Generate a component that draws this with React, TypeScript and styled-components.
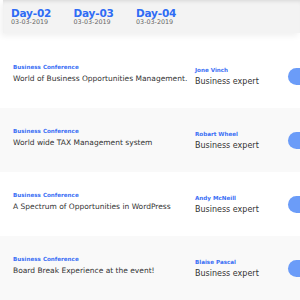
import React from "react";
import styled, { createGlobalStyle } from "styled-components";

const Global = createGlobalStyle`
  html, body { margin: 0; padding: 0; background: #ffffff; }
  body { font-family: "DejaVu Sans", "Inter", sans-serif; overflow: hidden; }
`;

const Page = styled.div`
  width: 300px;
  height: 300px;
  overflow: hidden;
  display: flex;
  flex-direction: column;
`;

const TabBar = styled.div`
  height: 33px;
  flex: 0 0 auto;
  background: #f3f3f3;
  box-shadow: inset 0 4px 4px -3px rgba(0, 0, 0, 0.12), -2px 3px 6px rgba(0, 0, 0, 0.06);
  margin-left: 3px;
  display: flex;
  align-items: flex-start;
  padding: 8px 0 0 8px;
  box-sizing: border-box;
`;

const Tab = styled.div`
  width: 62.5px;
  display: flex;
  flex-direction: column;
`;

const DayLabel = styled.div`
  color: #2f6cf5;
  font-size: 10.5px;
  font-weight: 600;
  line-height: 11px;
  letter-spacing: -0.2px;
`;

const DateLabel = styled.div`
  color: #666;
  font-size: 6.4px;
  line-height: 7px;
`;

const List = styled.div`
  margin-top: 11px;
  display: flex;
  flex-direction: column;
`;

const Row = styled.div<{ $shade: boolean }>`
  height: 64px;
  flex: 0 0 auto;
  background: ${(p) => (p.$shade ? "#f9f9f9" : "#ffffff")};
  display: flex;
  align-items: center;
  padding-left: 13px;
  box-sizing: border-box;
  overflow: hidden;
`;

const Info = styled.div`
  flex: 0 0 182px;
  display: flex;
  flex-direction: column;
  margin-top: -4px;
`;

const Category = styled.div`
  color: #3a6ff5;
  font-size: 5.6px;
  font-weight: 600;
  line-height: 9px;
`;

const Title = styled.div`
  color: #333;
  font-size: 7.5px;
  line-height: 13px;
  white-space: nowrap;
`;

const Speaker = styled.div`
  flex: 0 0 93px;
  display: flex;
  flex-direction: column;
  margin-top: 1px;
`;

const SpeakerName = styled.div`
  color: #3a6ff5;
  font-size: 5.6px;
  font-weight: 600;
  line-height: 9px;
`;

const Role = styled.div`
  color: #333;
  font-size: 8px;
  line-height: 13px;
  white-space: nowrap;
`;

const JoinButton = styled.div`
  flex: 0 0 40px;
  height: 17px;
  border-radius: 9px;
  background: #6b9cf8;
`;

const days = [
  { day: "Day-02", date: "03-03-2019" },
  { day: "Day-03", date: "03-03-2019" },
  { day: "Day-04", date: "03-03-2019" },
];

const sessions = [
  { title: "World of Business Opportunities Management.", name: "Jone Vinch" },
  { title: "World wide TAX Management system", name: "Robart Wheel" },
  { title: "A Spectrum of Opportunities in WordPress", name: "Andy McNeill" },
  { title: "Board Break Experience at the event!", name: "Blaise Pascal" },
];

export default function App() {
  return (
    <Page>
      <Global />
      <TabBar>
        {days.map((d) => (
          <Tab key={d.day}>
            <DayLabel>{d.day}</DayLabel>
            <DateLabel>{d.date}</DateLabel>
          </Tab>
        ))}
      </TabBar>
      <List>
        {sessions.map((s, i) => (
          <Row key={s.name} $shade={i % 2 === 1}>
            <Info>
              <Category>Business Conference</Category>
              <Title>{s.title}</Title>
            </Info>
            <Speaker>
              <SpeakerName>{s.name}</SpeakerName>
              <Role>Business expert</Role>
            </Speaker>
            <JoinButton />
          </Row>
        ))}
      </List>
    </Page>
  );
}
